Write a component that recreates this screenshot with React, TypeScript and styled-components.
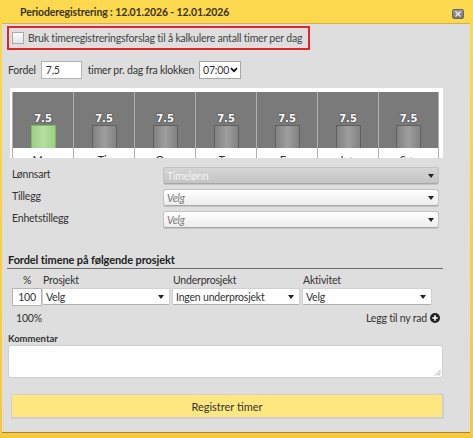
import React from "react";
import styled, { createGlobalStyle } from "styled-components";

const GlobalStyle = createGlobalStyle`
  html, body { margin: 0; padding: 0; }
  body { font-family: Lato, "Open Sans", sans-serif; color: #333; }
  * { box-sizing: border-box; }
`;

const Window = styled.div`
  width: 473px;
  height: 438px;
  background: linear-gradient(#fcd94e, #f6c93e);
  display: flex;
  flex-direction: column;
  padding: 0 3px 5px 2px;
  overflow: hidden;
  white-space: nowrap;
  letter-spacing: -0.2px;
`;

const TitleBar = styled.div`
  height: 23px;
  flex: none;
  display: flex;
  align-items: center;
  justify-content: space-between;
  padding: 1px 6px 0 18px;
  font-size: 10.5px;
  letter-spacing: -0.1px;
  font-weight: 700;
  color: #3a3320;
`;

const CloseBtn = styled.div`
  width: 12px;
  height: 10px;
  border-radius: 2px;
  background: linear-gradient(#9a9a9a, #777);
  border: 1px solid #666;
  display: flex;
  align-items: center;
  justify-content: center;
  margin-top: 4px;
`;

const Content = styled.div`
  flex: 1;
  background: #dedede;
  border-top: 1px solid #d2b24a;
  border-bottom: 1px solid #a88a2a;
  display: flex;
  flex-direction: column;
  font-size: 10.5px;
`;

const SuggestBox = styled.label`
  margin: 2px 0 0 5px;
  width: 303px;
  height: 24px;
  border: 2px solid #e2242b;
  display: flex;
  align-items: center;
  padding-left: 3px;
  gap: 4px;
  color: #444;
`;

const Check = styled.span`
  width: 12px;
  height: 12px;
  border: 1px solid #a9a9a9;
  background: linear-gradient(#fafafa, #e6e6e6);
  flex: none;
`;

const FordelRow = styled.div`
  margin: 11px 0 0 6px;
  height: 18px;
  display: flex;
  align-items: center;
`;

const SmallInput = styled.div<{ $w: number; $align?: string }>`
  width: ${(p) => p.$w}px;
  height: 18px;
  background: #fff;
  border: 1px solid #b5b5b5;
  display: flex;
  align-items: center;
  justify-content: ${(p) => p.$align || "flex-start"};
  padding: 0 4px;
  color: #333;
`;

const TimeSelect = styled.div`
  width: 42px;
  height: 18px;
  background: #fff;
  border: 1px solid #a5a5a5;
  display: flex;
  align-items: center;
  justify-content: space-between;
  padding: 0 2px 0 3px;
`;

const Spacer = styled.span<{ $w: number }>`
  width: ${(p) => p.$w}px;
  flex: none;
`;

const ChartFrame = styled.div`
  margin: 9px 0 0 8px;
  width: 433px;
  height: 70px;
  background: #fff;
  padding: 4px 0 0 2px;
  overflow: hidden;
`;

const Plot = styled.div`
  width: 427px;
  display: grid;
  grid-template-columns: repeat(7, 61px);
`;

const DayCol = styled.div<{ $last?: boolean }>`
  display: flex;
  flex-direction: column;
  align-items: center;
  border-left: 1px solid #b0b0b0;
  border-right: ${(p) => (p.$last ? "1px solid #b0b0b0" : "none")};
`;

const PlotCell = styled.div`
  width: 100%;
  height: 56px;
  background: #7a7a7a;
  display: flex;
  flex-direction: column;
  align-items: center;
  justify-content: flex-end;
`;

const BarLabel = styled.div`
  color: #fff;
  font-family: "DejaVu Sans", sans-serif;
  font-weight: 700;
  font-size: 10px;
  letter-spacing: 0;
  text-shadow: 0 0 2px #444, 0 0 1px #444;
  margin-bottom: 1px;
`;

const Bar = styled.div<{ $active?: boolean }>`
  width: 25px;
  height: 23px;
  border: 1px solid ${(p) => (p.$active ? "#7fb866" : "#5f5f5f")};
  border-bottom: none;
  background: ${(p) =>
    p.$active
      ? "linear-gradient(90deg, #9ccf84, #b4df9e 50%, #9ccf84)"
      : "linear-gradient(90deg, #828282, #9e9e9e 50%, #828282)"};
`;

const Tick = styled.div`
  height: 4px;
`;

const DayName = styled.div`
  font-size: 11px;
  color: #333;
  line-height: 12px;
  margin-top: 2px;
`;

const FieldRows = styled.div`
  margin: 9px 0 0 10px;
  display: flex;
  flex-direction: column;
  gap: 5px;
`;

const FieldRow = styled.div`
  display: grid;
  grid-template-columns: 151px 276px;
  align-items: center;
  height: 17px;
`;

const FieldLabel = styled.span`
  color: #333;
  margin-top: -4px;
`;

const FancySelect = styled.div<{ $disabled?: boolean }>`
  width: 100%;
  height: 17px;
  border-radius: 3px;
  border: 1px solid #c2c2c2;
  border-bottom-color: #a8a8a8;
  box-shadow: 0 1px 0 rgba(0, 0, 0, 0.12);
  background: ${(p) =>
    p.$disabled
      ? "linear-gradient(#d6d6d6, #c4c4c4)"
      : "linear-gradient(#ffffff, #ececec)"};
  display: flex;
  align-items: center;
  justify-content: space-between;
  padding: 0 4px 0 3px;
  color: ${(p) => (p.$disabled ? "#f4f4f4" : "#777")};
`;

const Placeholder = styled.span`
  font-style: italic;
`;

const Caret = styled.span`
  width: 0;
  height: 0;
  border-left: 3.5px solid transparent;
  border-right: 3.5px solid transparent;
  border-top: 4px solid #222;
  flex: none;
`;

const SectionTitle = styled.div`
  margin: 25px 0 0 5px;
  width: 436px;
  border-bottom: 1px solid #6a6a6a;
  font-weight: 700;
  font-size: 11px;
  letter-spacing: -0.1px;
  color: #222;
  padding: 0 0 1px 1px;
  line-height: 14px;
`;

const ProjGrid = styled.div`
  margin: 4px 0 0 10px;
  display: grid;
  grid-template-columns: 30px 130px 130px 130px;
  row-gap: 1px;
`;

const ColHead = styled.div<{ $center?: boolean }>`
  text-align: ${(p) => (p.$center ? "center" : "left")};
  padding-left: ${(p) => (p.$center ? "0" : "1px")};
  line-height: 14px;
  color: #333;
`;

const RowSelect = styled.div<{ $w: number }>`
  width: ${(p) => p.$w}px;
  height: 17px;
  background: #fff;
  border: 1px solid #d0d0d0;
  border-bottom-color: #b0b0b0;
  border-radius: 2px;
  display: flex;
  align-items: center;
  justify-content: space-between;
  padding: 0 5px 0 3px;
  color: #333;
`;

const SumRow = styled.div`
  margin: 5px 0 0 14px;
  width: 424px;
  display: flex;
  justify-content: space-between;
  align-items: center;
  line-height: 14px;
`;

const AddLink = styled.span`
  display: flex;
  align-items: center;
  gap: 3px;
  color: #333;
`;

const CommentLabel = styled.div`
  margin: 8px 0 0 6px;
  font-size: 9.5px;
  letter-spacing: 0;
  line-height: 12px;
  font-weight: 700;
  color: #333;
`;

const TextArea = styled.div`
  margin: 0 0 0 6px;
  width: 435px;
  height: 33px;
  background: #fff;
  border: 1px solid #cfcfcf;
  border-radius: 3px;
  position: relative;
`;

const Grip = styled.svg`
  position: absolute;
  right: 1px;
  bottom: 1px;
`;

const SubmitButton = styled.button`
  margin: 16px 0 0 9px;
  width: 433px;
  height: 25px;
  background: #fee681;
  border: 1px solid #cfcfcf;
  border-width: 1px 2px 2px 1px;
  font-family: Lato, sans-serif;
  font-size: 11px;
  color: #333;
  padding: 0;
`;

const days = ["Man", "Tir", "Ons", "Tor", "Fre", "Lør", "Søn"];

export default function App() {
  return (
    <>
      <GlobalStyle />
      <Window>
        <TitleBar>
          <span>Perioderegistrering : 12.01.2026 - 12.01.2026</span>
          <CloseBtn>
            <svg width="6" height="6" viewBox="0 0 6 6">
              <path d="M0.5 0.5L5.5 5.5M5.5 0.5L0.5 5.5" stroke="#eee" strokeWidth="1.3" />
            </svg>
          </CloseBtn>
        </TitleBar>
        <Content>
          <SuggestBox>
            <Check />
            <span>Bruk timeregistreringsforslag til å kalkulere antall timer per dag</span>
          </SuggestBox>

          <FordelRow>
            <span>Fordel</span>
            <Spacer $w={5} />
            <SmallInput $w={41}>7,5</SmallInput>
            <Spacer $w={6} />
            <span>timer pr. dag fra klokken</span>
            <Spacer $w={5} />
            <TimeSelect>
              <span>07:00</span>
              <svg width="8" height="6" viewBox="0 0 8 6">
                <path d="M1 1.2L4 4.2L7 1.2" stroke="#111" strokeWidth="1.8" fill="none" />
              </svg>
            </TimeSelect>
          </FordelRow>

          <ChartFrame>
            <Plot>
              {days.map((d, i) => (
                <DayCol key={d} $last={i === 6}>
                  <PlotCell>
                    <BarLabel>7.5</BarLabel>
                    <Bar $active={i === 0} />
                  </PlotCell>
                  <Tick />
                  <DayName>{d}</DayName>
                </DayCol>
              ))}
            </Plot>
          </ChartFrame>

          <FieldRows>
            <FieldRow>
              <FieldLabel>Lønnsart</FieldLabel>
              <FancySelect $disabled>
                <span>Timelønn</span>
                <Caret />
              </FancySelect>
            </FieldRow>
            <FieldRow>
              <FieldLabel>Tillegg</FieldLabel>
              <FancySelect>
                <Placeholder>Velg</Placeholder>
                <Caret />
              </FancySelect>
            </FieldRow>
            <FieldRow>
              <FieldLabel>Enhetstillegg</FieldLabel>
              <FancySelect>
                <Placeholder>Velg</Placeholder>
                <Caret />
              </FancySelect>
            </FieldRow>
          </FieldRows>

          <SectionTitle>Fordel timene på følgende prosjekt</SectionTitle>

          <ProjGrid>
            <ColHead $center>%</ColHead>
            <ColHead>Prosjekt</ColHead>
            <ColHead>Underprosjekt</ColHead>
            <ColHead>Aktivitet</ColHead>
            <SmallInput $w={30} $align="center">100</SmallInput>
            <RowSelect $w={128}>
              <span>Velg</span>
              <Caret />
            </RowSelect>
            <RowSelect $w={128}>
              <span>Ingen underprosjekt</span>
              <Caret />
            </RowSelect>
            <RowSelect $w={130}>
              <span>Velg</span>
              <Caret />
            </RowSelect>
          </ProjGrid>

          <SumRow>
            <span>100%</span>
            <AddLink>
              Legg til ny rad
              <svg width="10" height="10" viewBox="0 0 10 10">
                <circle cx="5" cy="5" r="5" fill="#222" />
                <path d="M5 2.3V7.7M2.3 5H7.7" stroke="#fff" strokeWidth="1.6" />
              </svg>
            </AddLink>
          </SumRow>

          <CommentLabel>Kommentar</CommentLabel>
          <TextArea>
            <Grip width="7" height="7" viewBox="0 0 7 7">
              <path d="M6.5 1L1 6.5M6.5 3.5L3.5 6.5M6.5 5.5L5.5 6.5" stroke="#999" strokeWidth="0.8" />
            </Grip>
          </TextArea>

          <SubmitButton>Registrer timer</SubmitButton>
        </Content>
      </Window>
    </>
  );
}
